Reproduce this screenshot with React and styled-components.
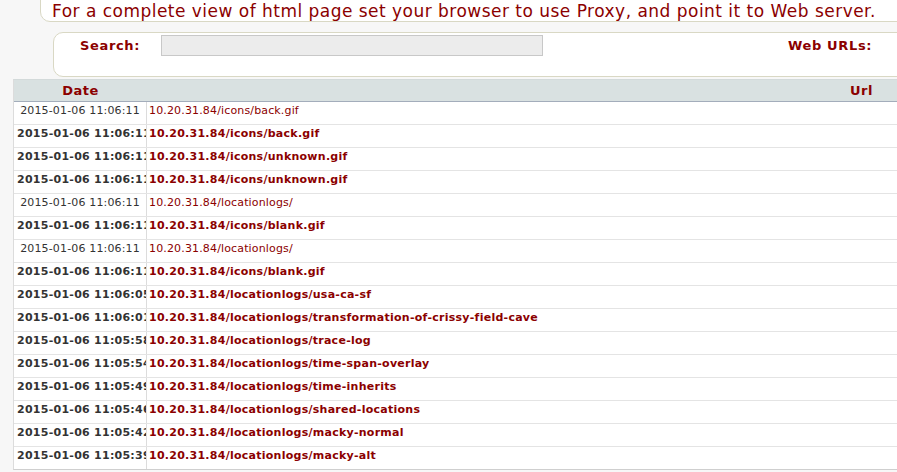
import React from 'react'
import styled, {createGlobalStyle} from 'styled-components'

const GlobalStyle = createGlobalStyle`
  html, body {
    margin: 0;
    padding: 0;
    background: #f7f7f7;
    overflow: hidden;
    font-family: "DejaVu Sans", Verdana, sans-serif;
  }
`

const Page = styled.div`
  width: 897px;
  height: 472px;
  overflow: hidden;
`

const Banner = styled.div`
  margin: -10px -30px 0 40px;
  padding: 10px 0 0 11px;
  height: 20px;
  line-height: 20px;
  background: white;
  border: 1px solid #d9d8c4;
  border-radius: 10px;
  color: #8b0000;
  font-size: 17px;
  letter-spacing: 0.48px;
  white-space: nowrap;
`

const SearchPanel = styled.div`
  display: flex;
  align-items: flex-start;
  margin: 10px -30px 0 53px;
  padding: 2px 0 0 0;
  height: 41px;
  background: white;
  border: 1px solid #d9d8c4;
  border-radius: 10px;
`

const Label = styled.span`
  width: ${p => p.width || 'auto'};
  padding-left: ${p => p.indent || '0px'};
  box-sizing: border-box;
  line-height: 21px;
  font-size: 13px;
  font-weight: bold;
  letter-spacing: 0.65px;
  color: #8b0000;
  white-space: nowrap;
`

const SearchInput = styled.input`
  box-sizing: border-box;
  width: 382px;
  height: 21px;
  margin: 0 245px 0 0;
  padding: 0 4px;
  background: #ececec;
  border: 1px solid #c8c8c8;
  font-family: inherit;
  font-size: 11px;
  outline: none;
`

const Table = styled.div`
  margin: 2px 0 0 13px;
  background: white;
  border-left: 1px solid #dcdcdc;
  border-bottom: 1px solid #cfcfcf;
  border-top: 1px solid #d3dada;
`

const HeadRow = styled.div`
  display: grid;
  grid-template-columns: 133px 1fr;
  height: 21px;
  background: #d9e1e1;
  border-bottom: 1px solid #a3adbb;
`

const HeadCell = styled.div`
  line-height: 21px;
  font-size: 13px;
  font-weight: bold;
  letter-spacing: 0.5px;
  color: #8b0000;
  text-align: ${p => p.align || 'center'};
  padding-right: ${p => p.align === 'right' ? '24px' : '0'};
`

const Row = styled.div`
  display: grid;
  grid-template-columns: 133px 1fr;
  height: 22px;
  border-bottom: 1px solid #e4e4e4;
  font-size: 11px;
  line-height: 13px;
  font-weight: ${p => p.bold ? 'bold' : 'normal'};
  letter-spacing: ${p => p.bold ? '0.26px' : '0.15px'};
  &:last-child {
    border-bottom: none;
  }
`

const DateCell = styled.div`
  box-sizing: border-box;
  padding: 2px 3px 0;
  border-right: 1px solid #dcdcdc;
  overflow: hidden;
  white-space: nowrap;
  text-align: center;
  color: #333;
`

const UrlCell = styled.div`
  padding: 2px 2px 0;
  white-space: nowrap;
  overflow: hidden;
  color: #8b0000;
`

const host = '10.20.31.84/'

const rows = [
  ['2015-01-06 11:06:11', 'icons/back.gif', false],
  ['2015-01-06 11:06:11', 'icons/back.gif', true],
  ['2015-01-06 11:06:11', 'icons/unknown.gif', true],
  ['2015-01-06 11:06:11', 'icons/unknown.gif', true],
  ['2015-01-06 11:06:11', 'locationlogs/', false],
  ['2015-01-06 11:06:11', 'icons/blank.gif', true],
  ['2015-01-06 11:06:11', 'locationlogs/', false],
  ['2015-01-06 11:06:11', 'icons/blank.gif', true],
  ['2015-01-06 11:06:05', 'locationlogs/usa-ca-sf', true],
  ['2015-01-06 11:06:01', 'locationlogs/transformation-of-crissy-field-cave', true],
  ['2015-01-06 11:05:58', 'locationlogs/trace-log', true],
  ['2015-01-06 11:05:54', 'locationlogs/time-span-overlay', true],
  ['2015-01-06 11:05:49', 'locationlogs/time-inherits', true],
  ['2015-01-06 11:05:46', 'locationlogs/shared-locations', true],
  ['2015-01-06 11:05:42', 'locationlogs/macky-normal', true],
  ['2015-01-06 11:05:39', 'locationlogs/macky-alt', true],
]

export default function App() {
  return (
    <Page>
      <GlobalStyle />
      <Banner>For a complete view of html page set your browser to use Proxy, and point it to Web server.</Banner>
      <SearchPanel>
        <Label width="107px" indent="26px">Search:</Label>
        <SearchInput type="text" />
        <Label>Web URLs:</Label>
      </SearchPanel>
      <Table>
        <HeadRow>
          <HeadCell>Date</HeadCell>
          <HeadCell align="right">Url</HeadCell>
        </HeadRow>
        {rows.map(([date, path, bold], i) => (
          <Row key={i} bold={bold}>
            <DateCell>{date}</DateCell>
            <UrlCell>{host + path}</UrlCell>
          </Row>
        ))}
      </Table>
    </Page>
  )
}
